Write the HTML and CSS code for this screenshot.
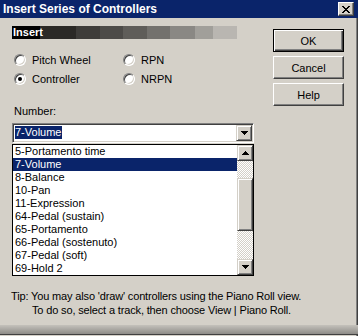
FILE: index.html
```html
<!DOCTYPE html>
<html lang="en">
<head>
<meta charset="UTF-8">
<title>Insert Series of Controllers</title>
<link rel="stylesheet" href="styles.css">
</head>
<body>

<div class="window">
  <div class="titlebar">
    <span class="title">Insert Series of Controllers</span>
    <span class="close">
      <svg width="8" height="7" viewBox="0 0 8 7" shape-rendering="crispEdges">
        <path d="M0 0h2v1h-2zM6 0h2v1h-2zM1 1h2v1h-2zM5 1h2v1h-2zM2 2h4v1h-4zM3 3h2v1h-2zM2 4h4v1h-4zM1 5h2v1h-2zM5 5h2v1h-2zM0 6h2v1h-2zM6 6h2v1h-2z" fill="#000"/>
      </svg>
    </span>
  </div>

  <div class="main">
    <div class="left">
      <div class="band"><span class="band-label">Insert</span></div>

      <div class="radios">
        <label class="radio-row"><span class="radio"></span>Pitch Wheel</label>
        <label class="radio-row"><span class="radio"></span>RPN</label>
        <label class="radio-row"><span class="radio checked"></span>Controller</label>
        <label class="radio-row"><span class="radio"></span>NRPN</label>
      </div>

      <div class="field-label">Number:</div>

      <div class="combo">
        <div class="combo-text"><span class="sel">7-Volume</span></div>
        <div class="raised drop-btn">
          <svg width="7" height="4" viewBox="0 0 7 4" shape-rendering="crispEdges">
            <path d="M0 0h7v1h-7zM1 1h5v1h-5zM2 2h3v1h-3zM3 3h1v1h-1z" fill="#000"/>
          </svg>
        </div>
      </div>

      <div class="list">
        <ul class="items">
          <li>5-Portamento time</li>
          <li class="selected">7-Volume</li>
          <li>8-Balance</li>
          <li>10-Pan</li>
          <li>11-Expression</li>
          <li>64-Pedal (sustain)</li>
          <li>65-Portamento</li>
          <li>66-Pedal (sostenuto)</li>
          <li>67-Pedal (soft)</li>
          <li>69-Hold 2</li>
        </ul>
        <div class="scrollbar">
          <div class="raised scroll-btn">
            <svg width="7" height="4" viewBox="0 0 7 4" shape-rendering="crispEdges">
              <path d="M3 0h1v1h-1zM2 1h3v1h-3zM1 2h5v1h-5zM0 3h7v1h-7z" fill="#000"/>
            </svg>
          </div>
          <div class="track track-top"></div>
          <div class="raised thumb"></div>
          <div class="track track-bottom"></div>
          <div class="raised scroll-btn">
            <svg width="7" height="4" viewBox="0 0 7 4" shape-rendering="crispEdges">
              <path d="M0 0h7v1h-7zM1 1h5v1h-5zM2 2h3v1h-3zM3 3h1v1h-1z" fill="#000"/>
            </svg>
          </div>
        </div>
      </div>
    </div>

    <div class="buttons">
      <div class="btn default">OK</div>
      <div class="btn">Cancel</div>
      <div class="btn">Help</div>
    </div>
  </div>

  <div class="tip">
    <div>Tip: You may also 'draw' controllers using the Piano Roll view.</div>
    <div class="tip-indent">To do so, select a track, then choose View | Piano Roll.</div>
  </div>

  <div class="bottom-bar"></div>
</div>

</body>
</html>
```

FILE: styles.css
```css
body {
  margin: 0;
  padding: 0;
  font-family: "Liberation Sans", Arial, sans-serif;
  font-size: 11px;
  color: #000;
  background-color: #d4d0c8;
}
.window {
  width: 358px;
  height: 336px;
  box-sizing: border-box;
  background-color: #d4d0c8;
  box-shadow: inset -1px 0 #404040, inset -2px 0 #808080;
  display: flex;
  flex-direction: column;
  overflow: hidden;
}
.titlebar {
  height: 18px;
  background-color: #0a246a;
  display: flex;
  align-items: center;
  justify-content: space-between;
  padding: 0 4px 0 3px;
}
.title {
  color: #fff;
  font-weight: bold;
  font-size: 12px;
}
.close {
  width: 16px;
  height: 14px;
  box-sizing: border-box;
  background-color: #d4d0c8;
  border: 1px solid;
  border-color: #fff #404040 #404040 #fff;
  box-shadow: inset -1px -1px #808080;
  display: flex;
  align-items: center;
  justify-content: center;
}
.main {
  display: flex;
  padding: 8px 0 0 12px;
}
.left {
  width: 242px;
}
.band {
  width: 225px;
  height: 13px;
  background: linear-gradient(to right,
    #000 0 28px,
    #2b2926 28px 64px,
    #3e3c39 64px 88px,
    #4d4b48 88px 111px,
    #5f5d59 111px 135px,
    #73716d 135px 158px,
    #8a8884 158px 183px,
    #a19f9a 183px 201px,
    #b9b6b1 201px 225px);
}
.band-label {
  display: block;
  color: #fff;
  font-weight: bold;
  line-height: 13px;
  padding-left: 1px;
}
.radios {
  display: grid;
  grid-template-columns: 109px 1fr;
  grid-auto-rows: 19px;
  margin-top: 15px;
  padding-left: 2px;
}
.radio-row {
  display: flex;
  align-items: flex-start;
  gap: 6px;
  line-height: 12px;
}
.radio {
  width: 12px;
  height: 12px;
  box-sizing: border-box;
  border-radius: 50%;
  border: 1px solid;
  border-color: #808080 #fff #fff #808080;
  background-color: #fff;
  box-shadow: inset 1px 1px #404040, inset -1px -1px #d4d0c8;
  display: flex;
  align-items: center;
  justify-content: center;
}
.radio.checked::after {
  content: "";
  width: 4px;
  height: 4px;
  border-radius: 50%;
  background-color: #000;
}
.field-label {
  margin-top: 13px;
  line-height: 13px;
  padding-left: 2px;
}
.combo {
  margin-top: 5px;
  height: 20px;
  box-sizing: border-box;
  border: 1px solid;
  border-color: #808080 #fff #fff #808080;
  box-shadow: inset 1px 1px #404040, inset -1px -1px #d4d0c8;
  background-color: #fff;
  display: flex;
  padding: 1px;
}
.combo-text {
  flex: 1;
  padding: 1px 0 0 1px;
}
.sel {
  display: inline-block;
  background-color: #0a246a;
  color: #fff;
  line-height: 13px;
  padding: 0 1px 0 0;
}
.raised {
  box-sizing: border-box;
  background-color: #d4d0c8;
  border: 1px solid;
  border-color: #d4d0c8 #404040 #404040 #d4d0c8;
  box-shadow: inset 1px 1px #fff, inset -1px -1px #808080;
}
.drop-btn {
  width: 16px;
  height: 16px;
  display: flex;
  align-items: center;
  justify-content: center;
}
.list {
  margin-top: 1px;
  height: 132px;
  box-sizing: border-box;
  border: 1px solid #000;
  background-color: #fff;
  display: flex;
}
.items {
  list-style: none;
  margin: 0;
  padding: 0;
  flex: 1;
}
.items li {
  height: 13px;
  line-height: 13px;
  padding-left: 2px;
  white-space: nowrap;
}
.items li.selected {
  background-color: #0a246a;
  color: #fff;
}
.scrollbar {
  width: 16px;
  display: flex;
  flex-direction: column;
}
.scroll-btn {
  height: 16px;
  display: flex;
  align-items: center;
  justify-content: center;
}
.track {
  background: repeating-conic-gradient(#d4d0c8 0 25%, #fff 0 50%) 0 0 / 2px 2px;
}
.track-top {
  height: 17px;
}
.thumb {
  height: 53px;
}
.track-bottom {
  flex: 1;
}
.buttons {
  margin-left: 19px;
  padding-top: 3px;
  display: flex;
  flex-direction: column;
  gap: 4px;
}
.btn {
  width: 71px;
  height: 23px;
  box-sizing: border-box;
  background-color: #d4d0c8;
  border: 1px solid;
  border-color: #fff #404040 #404040 #fff;
  box-shadow: inset -1px -1px #808080;
  display: flex;
  align-items: center;
  justify-content: center;
}
.btn.default {
  border-color: #000;
  box-shadow: inset 1px 1px #fff, inset -1px -1px #404040, inset -2px -2px #808080;
}
.tip {
  margin-top: 13px;
  padding-left: 11px;
  line-height: 14px;
  letter-spacing: -0.15px;
}
.tip-indent {
  padding-left: 21px;
}
.bottom-bar {
  margin-top: 8px;
  height: 9px;
  background: linear-gradient(#c4c1bb, #8e8c88);
  border-bottom: 1px solid #404040;
}
```
